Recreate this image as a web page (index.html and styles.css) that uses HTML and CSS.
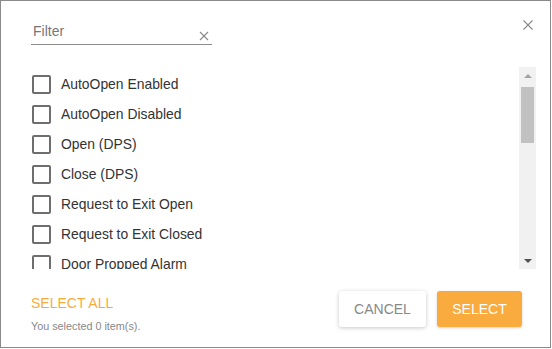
FILE: index.html
```html
<!DOCTYPE html>
<html>
<head>
<meta charset="utf-8">
<link rel="stylesheet" href="styles.css">
</head>
<body>
<div class="dialog">
  <button class="close" aria-label="Close">
    <svg width="10" height="10" viewBox="0 0 10 10"><path d="M0.5 0.5L9.5 9.5M9.5 0.5L0.5 9.5" stroke="#8a8a8a" stroke-width="1.1" fill="none"/></svg>
  </button>
  <div class="filter">
    <span class="placeholder">Filter</span>
    <svg class="clear" width="10" height="10" viewBox="0 0 10 10"><path d="M1 1L9 9M9 1L1 9" stroke="#8a8a8a" stroke-width="1.1" fill="none"/></svg>
  </div>
  <div class="listwrap">
    <ul class="list">
      <li><span class="box"></span>AutoOpen Enabled</li>
      <li><span class="box"></span>AutoOpen Disabled</li>
      <li><span class="box"></span>Open (DPS)</li>
      <li><span class="box"></span>Close (DPS)</li>
      <li><span class="box"></span>Request to Exit Open</li>
      <li><span class="box"></span>Request to Exit Closed</li>
      <li><span class="box"></span>Door Propped Alarm</li>
    </ul>
    <div class="scrollbar">
      <div class="arrow up"></div>
      <div class="track"><div class="thumb"></div></div>
      <div class="arrow down"></div>
    </div>
  </div>
  <div class="footer">
    <div class="left">
      <div class="selectall">SELECT ALL</div>
      <div class="count">You selected 0 item(s).</div>
    </div>
    <div class="buttons">
      <button class="btn cancel">CANCEL</button>
      <button class="btn primary">SELECT</button>
    </div>
  </div>
</div>
</body>
</html>
```

FILE: styles.css
```css
* { box-sizing: border-box; }
html, body { margin: 0; padding: 0; background: #fff; }
body { font-family: "Liberation Sans", Arial, sans-serif; }

.dialog {
  position: relative;
  width: 551px;
  height: 348px;
  border: 1px solid #8a8a8a;
  background: #fff;
  padding: 0 0 0 30px;
}

.close {
  position: absolute;
  top: 19px;
  right: 17px;
  border: 0;
  background: none;
  padding: 0;
  width: 10px;
  height: 10px;
  display: flex;
}

.filter {
  width: 181px;
  margin-top: 21px;
  height: 23px;
  border-bottom: 1px solid #8c8c8c;
  display: flex;
  align-items: flex-start;
  justify-content: space-between;
  padding: 0 3px 0 2px;
}
.placeholder { font-size: 14px; color: #777; line-height: 18px; }
.clear { margin-top: 9px; }

.listwrap {
  margin-top: 22px;
  width: 505px;
  height: 202px;
  display: flex;
}
.list {
  list-style: none;
  margin: 0;
  padding: 2px 0 0 0;
  flex: 1;
  overflow: hidden;
}
.list li {
  height: 30px;
  display: flex;
  align-items: center;
  font-size: 13.9px;
  color: #333;
  white-space: nowrap;
}
.box {
  width: 19px;
  height: 19px;
  border: 2px solid #6e6e6e;
  border-radius: 2px;
  margin: 1px 10px 0 1px;
  flex: none;
}

.scrollbar {
  width: 17px;
  background: #f1f1f1;
  display: flex;
  flex-direction: column;
}
.arrow { height: 17px; display: flex; align-items: center; justify-content: center; }
.arrow::before {
  content: "";
  width: 0; height: 0;
  border-left: 4px solid transparent;
  border-right: 4px solid transparent;
}
.up::before { border-bottom: 4px solid #a3a3a3; }
.down::before { border-top: 4px solid #505050; }
.track { flex: 1; padding: 3px 2px 0; }
.thumb { height: 56px; background: #c1c1c1; }

.footer {
  margin-top: 22px;
  width: 491px;
  display: flex;
  justify-content: space-between;
}
.selectall { font-size: 14px; color: #f5ac3c; margin-top: 4px; line-height: 16px; }
.count { font-size: 10.8px; color: #888; margin-top: 9px; }

.buttons { display: flex; gap: 11px; }
.btn {
  font-family: "Liberation Sans", Arial, sans-serif;
  font-size: 14px;
  height: 36px;
  border: 0;
  border-radius: 3px;
  padding: 0;
}
.cancel {
  width: 87px;
  background: #fff;
  color: #888;
  box-shadow: 0 1px 4px rgba(0,0,0,0.22);
}
.primary {
  width: 85px;
  background: #f9ab3d;
  color: #fff;
  box-shadow: 0 1px 3px rgba(0,0,0,0.18);
}
```
